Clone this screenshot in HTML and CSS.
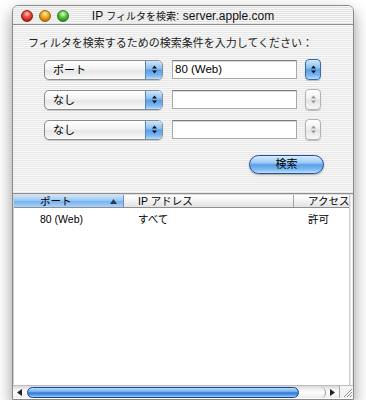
FILE: index.html
```html
<!DOCTYPE html>
<html lang="ja">
<head>
<meta charset="utf-8">
<title>IP フィルタを検索</title>
<link rel="stylesheet" href="styles.css">
</head>
<body>
<div class="window">
  <div class="titlebar">
    <div class="lights">
      <span class="light red"></span>
      <span class="light yellow"></span>
      <span class="light green"></span>
    </div>
    <div class="title">IP <span class="cjk">フィルタを検索</span>: server.apple.com</div>
    <div></div>
  </div>

  <div class="pane">
    <div class="prompt">フィルタを検索するための検索条件を入力してください：</div>
    <div class="rows">
      <div class="row">
        <div class="popup">
          <span class="popup-label">ポート</span>
          <span class="popup-arrows"><svg width="7" height="11" viewBox="0 0 7 11"><path d="M3.5 1.5L6 4.5H1Z M3.5 9.5L6 6.5H1Z" fill="#111"/></svg></span>
        </div>
        <div class="field">80 (Web)</div>
        <div class="stepper"><svg width="7" height="11" viewBox="0 0 7 11"><path d="M3.5 1.5L6 4.5H1Z M3.5 9.5L6 6.5H1Z" fill="#111"/></svg></div>
      </div>
      <div class="row">
        <div class="popup">
          <span class="popup-label">なし</span>
          <span class="popup-arrows"><svg width="7" height="11" viewBox="0 0 7 11"><path d="M3.5 1.5L6 4.5H1Z M3.5 9.5L6 6.5H1Z" fill="#111"/></svg></span>
        </div>
        <div class="field"></div>
        <div class="stepper off"><svg width="7" height="11" viewBox="0 0 7 11"><path d="M3.5 1.5L6 4.5H1Z M3.5 9.5L6 6.5H1Z" fill="#9a9a9a"/></svg></div>
      </div>
      <div class="row">
        <div class="popup">
          <span class="popup-label">なし</span>
          <span class="popup-arrows"><svg width="7" height="11" viewBox="0 0 7 11"><path d="M3.5 1.5L6 4.5H1Z M3.5 9.5L6 6.5H1Z" fill="#111"/></svg></span>
        </div>
        <div class="field"></div>
        <div class="stepper off"><svg width="7" height="11" viewBox="0 0 7 11"><path d="M3.5 1.5L6 4.5H1Z M3.5 9.5L6 6.5H1Z" fill="#9a9a9a"/></svg></div>
      </div>
    </div>
    <div class="actions"><div class="btn">検索</div></div>
  </div>

  <div class="splitter"></div>

  <div class="table">
    <div class="main">
      <div class="header">
        <div class="hcol c1 sel"><span>ポート</span><svg class="sort" width="7" height="5" viewBox="0 0 7 5"><path d="M3.5 0L7 5H0Z" fill="#2a3a55"/></svg></div>
        <div class="hcol c2"><span>IP アドレス</span></div>
        <div class="hcol c3"><span>アクセス</span></div>
      </div>
      <div class="body">
        <div class="trow">
          <div class="cell c1">80 (Web)</div>
          <div class="cell c2">すべて</div>
          <div class="cell c3">許可</div>
        </div>
      </div>
    </div>
    <div class="vscroll"></div>
  </div>

  <div class="hscroll">
    <div class="arrow"><svg width="5" height="7" viewBox="0 0 5 7"><path d="M0 3.5L5 0V7Z" fill="#222"/></svg></div>
    <div class="track"><div class="thumb"></div><div class="trackend"></div></div>
    <div class="arrow"><svg width="5" height="7" viewBox="0 0 5 7"><path d="M5 3.5L0 0V7Z" fill="#222"/></svg></div>
    <div class="grip"><svg width="11" height="11" viewBox="0 0 11 11"><path d="M10 2L2 10M10 5L5 10M10 8L8 10" stroke="#8a8a8a" stroke-width="1"/><path d="M10 3L3 10M10 6L6 10" stroke="#fff" stroke-width="1"/></svg></div>
  </div>
</div>
</body>
</html>
```

FILE: styles.css
```css
html, body {
  margin: 0;
  padding: 0;
  background: #fff;
}
body {
  font-family: "Liberation Sans", "Noto Sans CJK JP", sans-serif;
  color: #000;
}
.window {
  margin: 5px 0 0 12px;
  width: 340px;
  height: 393px;
  border: 1px solid #8a8a8a;
  border-radius: 6px 6px 0 0;
  box-shadow: 0 7px 16px rgba(0, 0, 0, 0.42);
  display: flex;
  flex-direction: column;
  overflow: hidden;
  background: #fff;
}
.titlebar {
  height: 18px;
  border-bottom: 1px solid #8e8e8e;
  display: grid;
  grid-template-columns: 1fr auto 1fr;
  align-items: center;
  background: repeating-linear-gradient(to bottom, #f6f6f6 0 1px, #e4e4e4 1px 2px);
}
.lights {
  display: flex;
  gap: 6px;
  padding-left: 8px;
  padding-top: 1px;
}
.light {
  width: 12px;
  height: 12px;
  border-radius: 50%;
  box-sizing: border-box;
}
.red {
  background: radial-gradient(circle at 50% 30%, #ffc9c0 0, #f0584c 35%, #b8140c 80%);
  border: 1px solid #8c1a12;
}
.yellow {
  background: radial-gradient(circle at 50% 30%, #fff0b0 0, #f3b32c 35%, #c07200 80%);
  border: 1px solid #94620d;
}
.green {
  background: radial-gradient(circle at 50% 30%, #dcffc8 0, #6cd052 35%, #1f8c12 80%);
  border: 1px solid #2a7a1c;
}
.title {
  font-size: 12px;
  white-space: nowrap;
  color: #111;
  padding-top: 1px;
}
.title .cjk {
  font-size: 10px;
}
.pane {
  height: 168px;
  box-sizing: border-box;
  padding: 11px 0 0 15px;
  background: repeating-linear-gradient(to bottom, #f8f8f8 0 1px, #e8e8e8 1px 2px);
  display: flex;
  flex-direction: column;
}
.prompt {
  font-size: 11px;
  line-height: 14px;
  white-space: nowrap;
  color: #222;
}
.rows {
  margin-top: 9px;
  padding-left: 16px;
  display: flex;
  flex-direction: column;
  gap: 9px;
}
.row {
  display: flex;
  align-items: center;
  height: 21px;
}
.popup {
  width: 119px;
  height: 20px;
  box-sizing: border-box;
  border: 1px solid #8c8c8c;
  border-radius: 5px;
  display: flex;
  overflow: hidden;
  background: linear-gradient(to bottom, #ffffff 0%, #f2f2f2 45%, #e6e6e6 55%, #fafafa 100%);
  box-shadow: 0 1px 1px rgba(0, 0, 0, 0.15);
}
.popup-label {
  flex: 1;
  font-size: 11px;
  line-height: 18px;
  padding-left: 8px;
}
.popup-arrows {
  width: 16px;
  border-left: 1px solid #5a86c0;
  display: flex;
  align-items: center;
  justify-content: center;
  background: linear-gradient(to bottom, #cfe6fb 0%, #8fc2f2 40%, #5a9fe8 52%, #79b6f2 80%, #b6dcfb 100%);
}
.field {
  margin-left: 9px;
  width: 125px;
  height: 19px;
  box-sizing: border-box;
  border: 1px solid #a8a8a8;
  border-top-color: #7c7c7c;
  background: #fff;
  box-shadow: inset 0 1px 0 #d8d8d8;
  font-size: 11.5px;
  line-height: 17px;
  padding-left: 2px;
}
.stepper {
  margin-left: 8px;
  width: 16px;
  height: 21px;
  box-sizing: border-box;
  border: 1px solid #3a6aae;
  border-radius: 4px;
  display: flex;
  align-items: center;
  justify-content: center;
  background: linear-gradient(to bottom, #cfe6fb 0%, #8fc2f2 40%, #5a9fe8 52%, #79b6f2 80%, #b6dcfb 100%);
  box-shadow: 0 1px 1px rgba(0, 0, 0, 0.2);
}
.stepper.off {
  border-color: #b2b2b2;
  background: linear-gradient(to bottom, #ffffff 0%, #f0f0f0 45%, #e4e4e4 55%, #f8f8f8 100%);
}
.actions {
  margin-top: 15px;
  display: flex;
  justify-content: flex-end;
  padding-right: 29px;
}
.btn {
  width: 75px;
  height: 19px;
  box-sizing: border-box;
  border: 1px solid #244f96;
  border-radius: 10px;
  font-size: 11px;
  line-height: 17px;
  text-align: center;
  background: linear-gradient(to bottom, #d6ebfd 0%, #9ccaf5 40%, #5b9fe9 52%, #7fbaf3 80%, #c2e3fd 100%);
  box-shadow: 0 1px 2px rgba(0, 0, 0, 0.3);
}
.splitter {
  height: 1px;
  border-top: 1px solid #8e8e8e;
  background: #dcdcdc;
}
.table {
  height: 190px;
  display: flex;
  border-left: 1px solid #cfcfcf;
}
.main {
  flex: 1;
  display: flex;
  flex-direction: column;
  background: #fff;
}
.header {
  height: 12px;
  display: flex;
  border-bottom: 1px solid #8e8e8e;
  background: linear-gradient(to bottom, #ffffff 0%, #f2f2f2 50%, #e2e2e2 100%);
  font-size: 10.5px;
  line-height: 12px;
}
.hcol {
  box-sizing: border-box;
  display: flex;
  align-items: center;
  border-right: 1px solid #a4a4a4;
  white-space: nowrap;
  overflow: hidden;
}
.hcol.sel {
  background: linear-gradient(to bottom, #cfe5fb 0%, #9cc9f4 45%, #78b3ef 55%, #a8d3fa 100%);
  border-right-color: #6b8fbf;
}
.c1 { width: 110px; padding-left: 26px; }
.c2 { width: 170px; padding-left: 14px; }
.c3 { flex: 1; padding-left: 14px; border-right: 0; }
.sort { margin-left: auto; margin-right: 6px; }
.body {
  flex: 1;
  padding-top: 3px;
}
.trow {
  display: flex;
  height: 16px;
  font-size: 10.5px;
  line-height: 16px;
}
.cell { box-sizing: border-box; white-space: nowrap; }
.vscroll {
  width: 13px;
  background: linear-gradient(to right, #dcdcdc 0%, #f2f2f2 25%, #fcfcfc 50%, #efefef 80%, #dedede 100%);
  border-left: 1px solid #cccccc;
  box-sizing: border-box;
}
.hscroll {
  height: 13px;
  display: flex;
  border-top: 1px solid #bdbdbd;
  box-sizing: border-box;
  background: linear-gradient(to bottom, #d8d8d8 0%, #f2f2f2 30%, #fdfdfd 55%, #ececec 100%);
}
.arrow {
  width: 13px;
  display: flex;
  align-items: center;
  justify-content: center;
}
.track {
  flex: 1;
  display: flex;
  align-items: center;
  padding-left: 1px;
}
.thumb {
  width: 272px;
  height: 11px;
  box-sizing: border-box;
  border: 1px solid #1a4690;
  border-radius: 6px;
  background: linear-gradient(to bottom, #bcdcfb 0%, #74b0ee 40%, #2f76d6 55%, #5b9fec 80%, #a2cffa 100%);
}
.trackend {
  margin-left: auto;
  width: 6px;
  height: 11px;
  border-right: 1px solid #9a9a9a;
  border-radius: 0 6px 6px 0;
}
.grip {
  width: 13px;
  border-left: 1px solid #a8a8a8;
  display: flex;
  align-items: flex-end;
  justify-content: flex-end;
  background: #f4f4f4;
}
```
